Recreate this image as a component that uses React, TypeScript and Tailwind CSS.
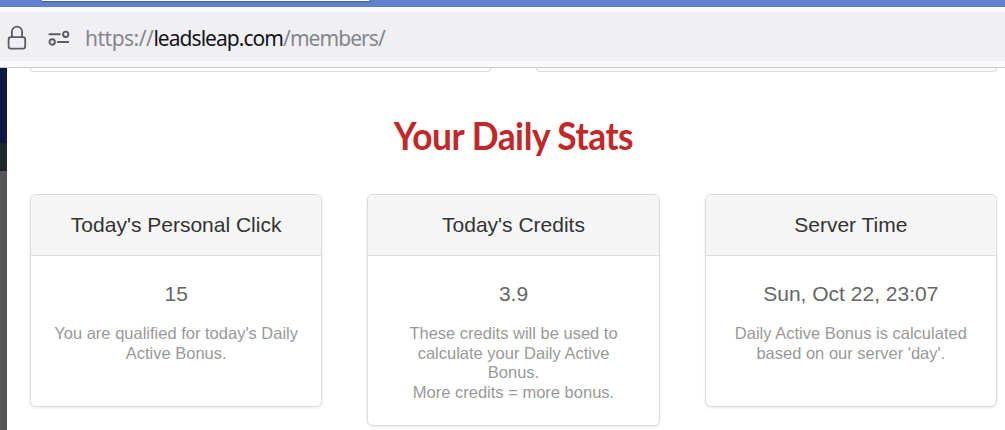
import type { ReactNode } from "react";

type StatCardProps = {
  title: string;
  value: string;
  children: ReactNode;
};

function StatCard({ title, value, children }: StatCardProps) {
  return (
    <div className="flex-1 rounded-md border border-[#dcdcdc] bg-white text-center shadow-[0_1px_3px_rgba(0,0,0,0.09)]">
      <h2 className="h-[61px] rounded-t-[5px] border-b border-[#dcdcdc] bg-[#f5f5f5] text-[21px] leading-[60px] text-[#333]">
        {title}
      </h2>
      <div className="px-[22.5px] pt-6 pb-[22.5px]">
        <div className="mb-4 text-[21px] leading-7 text-[#666]">{value}</div>
        <p className="text-[16.5px] leading-[19.7px] text-[#999]">{children}</p>
      </div>
    </div>
  );
}

function LockIcon() {
  return (
    <svg width="20" height="26" viewBox="0 0 20 26" fill="none" stroke="#5b5b66" strokeWidth="1.8">
      <rect x="1.6" y="12.1" width="16.6" height="11.6" rx="2.4" />
      <path d="M4.9 12.1V6.7a5.1 5.1 0 0 1 10.2 0v5.4" />
    </svg>
  );
}

function PermissionsIcon() {
  return (
    <svg width="22" height="16" viewBox="0 0 22 16" fill="none" stroke="#5b5b66" strokeWidth="1.9" strokeLinecap="round">
      <path d="M1.4 4.3h10.4M9.8 12h10.4" />
      <circle cx="17.7" cy="4.3" r="2.7" />
      <circle cx="4.2" cy="12" r="2.7" />
    </svg>
  );
}

export default function App() {
  return (
    <main className="h-[430px] w-[1005px] overflow-hidden bg-white font-['Liberation_Sans',Arial,sans-serif]">
      {/* BROWSER BAR */}
      <div className="h-[7px] bg-[#6181cb] pl-[42px]">
        <div className="h-px w-[327px] bg-white shadow-[0_1px_1px_#3a5599]"></div>
      </div>
      <header className="h-[61px] border-b border-[#c9c9d0] bg-[#f9f9fb] pt-[5px] pb-[6px]">
        <div className="flex h-[49px] items-center bg-[#f0f0f4] pt-0.5 pl-[7px]">
          <LockIcon />
          <div className="ml-[21px]">
            <PermissionsIcon />
          </div>
          <span className="ml-[15px] pt-[3px] font-['Noto_Sans',sans-serif] text-[21px] tracking-[-0.95px] whitespace-nowrap text-[#85858d]">
            <span className="tracking-[-0.5px]">https://</span>
            <span className="text-[#15141a]">leadsleap.com</span>/members/
          </span>
        </div>
      </header>

      <div className="flex h-[362px]">
        {/* LEFT EDGE */}
        <div className="w-[7px] shrink-0 bg-[#565656]">
          <div className="h-[75px] bg-[#0e1844]"></div>
          <div className="h-7 bg-[#1d2a2a]"></div>
        </div>

        <div className="flex-1 pr-2 pl-[23px]">
          {/* BOTTOM OF THE PREVIOUS CARDS */}
          <div className="flex gap-[45px]">
            <div className="h-1 flex-1 rounded-b-md border border-t-0 border-[#dcdcdc]"></div>
            <div className="h-1 flex-1 rounded-b-md border border-t-0 border-[#dcdcdc] bg-[#fafafa]"></div>
          </div>

          {/* DAILY STATS */}
          <h1 className="mt-[39px] mb-[35px] scale-x-[0.93] text-center font-['Lato',sans-serif] text-[38px] leading-12 font-bold tracking-[-0.5px] text-[#c02829]">
            Your Daily Stats
          </h1>
          <div className="flex items-start gap-[45px]">
            <StatCard title="Today's Personal Click" value="15">
              You are qualified for today's Daily Active Bonus.
              <br />
              <br />
            </StatCard>
            <StatCard title="Today's Credits" value="3.9">
              These credits will be used to calculate your Daily Active Bonus.
              <br />
              More credits = more bonus.
            </StatCard>
            <StatCard title="Server Time" value="Sun, Oct 22, 23:07">
              Daily Active Bonus is calculated based on our server 'day'.
              <br />
              <br />
            </StatCard>
          </div>
        </div>
      </div>
    </main>
  );
}
